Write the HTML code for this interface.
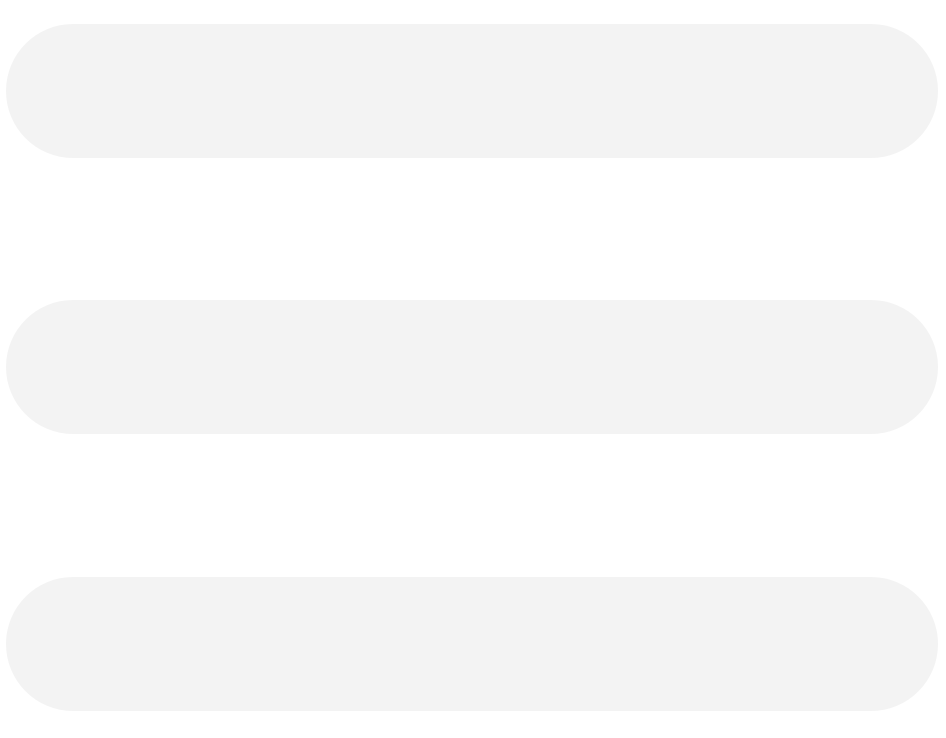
<!DOCTYPE html>
<html><head><style>
html,body{margin:0;padding:0;background:#fff;width:946px;height:738px;overflow:hidden}
.b{position:absolute;left:6px;width:932px;height:134px;border-radius:67px;background:#f3f3f3}
</style></head><body>
<div class="b" style="top:24px"></div>
<div class="b" style="top:300px"></div>
<div class="b" style="top:577px"></div>
</body></html>
